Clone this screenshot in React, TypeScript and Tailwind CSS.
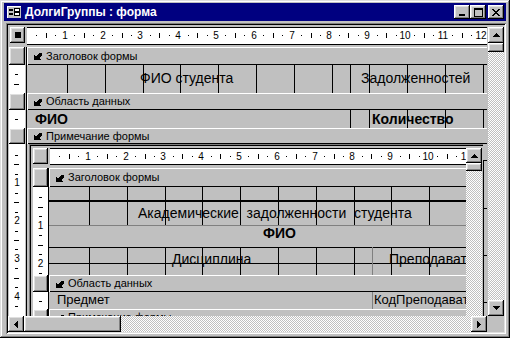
import React from 'react'

const CM = 37.8
const raised =
  'bg-[#c0c0c0] shadow-[inset_-1px_-1px_#000,inset_1px_1px_#fff,inset_-2px_-2px_#808080,inset_2px_2px_#dfdfdf]'
const checker =
  '[background-image:repeating-conic-gradient(#c0c0c0_0_25%,#fff_0_50%)] [background-size:2px_2px]'

type Dir = 'up' | 'down' | 'left' | 'right'

function Tri({ dir }: { dir: Dir }) {
  const rows = [1, 3, 5, 7]
  if (dir === 'up' || dir === 'down') {
    return (
      <svg width="7" height="4" shapeRendering="crispEdges">
        {rows.map((w, i) => (
          <rect key={i} x={(7 - w) / 2} y={dir === 'up' ? i : 3 - i} width={w} height="1" fill="#000" />
        ))}
      </svg>
    )
  }
  return (
    <svg width="4" height="7" shapeRendering="crispEdges">
      {rows.map((h, i) => (
        <rect key={i} y={(7 - h) / 2} x={dir === 'left' ? i : 3 - i} height={h} width="1" fill="#000" />
      ))}
    </svg>
  )
}

function ScrollBtn({ dir, className = 'w-[16px] h-[16px]' }: { dir: Dir; className?: string }) {
  return (
    <div className={`${raised} ${className} shrink-0 flex items-center justify-center`}>
      <Tri dir={dir} />
    </div>
  )
}

// section marker: bold arrow pointing down-left
function SectionGlyph() {
  return (
    <svg width="8" height="8" viewBox="0 0 8 8" shapeRendering="crispEdges">
      <polygon points="0,8 0,3 2,5 5,1 8,1 8,3 5,6 7,8" fill="#000" />
    </svg>
  )
}

function Bar({ label, h }: { label: string; h: string }) {
  return (
    <div
      className={`${h} shrink-0 flex items-center gap-[4px] pl-[7px] text-[11px] leading-none whitespace-nowrap shadow-[inset_0_1px_#fff,inset_1px_0_#fff,inset_0_-1px_#000]`}
    >
      <SectionGlyph />
      <span>{label}</span>
    </div>
  )
}

function HRuler({ count, className }: { count: number; className: string }) {
  const marks = []
  for (let i = 1; i <= count; i++) {
    const x = Math.round((i * CM) / 4)
    if (i % 4 === 0)
      marks.push(
        <span key={i} className="absolute top-0 h-full flex items-center -translate-x-1/2 text-[10px] leading-none" style={{ left: x }}>
          {i / 4}
        </span>
      )
    else if (i % 2 === 0) marks.push(<span key={i} className="absolute top-[5px] w-px h-[5px] bg-black" style={{ left: x }} />)
    else marks.push(<span key={i} className="absolute top-[7px] w-px h-px bg-black" style={{ left: x }} />)
  }
  return <div className={`relative bg-white overflow-hidden ${className}`}>{marks}</div>
}

function VRuler({ count, origin, className }: { count: number; origin: number; className: string }) {
  const marks = []
  for (let i = 1; i <= count; i++) {
    const y = Math.round(origin + (i * CM) / 4)
    if (i % 4 === 0)
      marks.push(
        <span key={i} className="absolute left-0 w-full flex justify-center -translate-y-1/2 text-[10px] leading-none" style={{ top: y }}>
          {i / 4}
        </span>
      )
    else if (i % 2 === 0) marks.push(<span key={i} className="absolute left-[5px] w-[5px] h-px bg-black" style={{ top: y }} />)
    else marks.push(<span key={i} className="absolute left-[6px] w-[3px] h-px bg-black" style={{ top: y }} />)
  }
  return <div className={`relative bg-white overflow-hidden shrink-0 ${className}`}>{marks}</div>
}

function GridLines({ from, to, top, height }: { from: number; to: number; top: number; height: number }) {
  const lines = []
  for (let k = from; k <= to; k++) {
    lines.push(
      <span key={k} className="absolute w-px bg-black" style={{ left: Math.round(40 + k * CM), top, height }} />
    )
  }
  return <>{lines}</>
}

function CapBtn({ children, className = '' }: { children: React.ReactNode; className?: string }) {
  return <div className={`${raised} w-[16px] h-[14px] flex items-center justify-center ${className}`}>{children}</div>
}

function FormIcon() {
  return (
    <svg width="16" height="16" viewBox="0 0 16 16" shapeRendering="crispEdges">
      <rect x="1" y="2" width="14" height="12" fill="#c0c0c0" />
      <rect x="1" y="2" width="14" height="1" fill="#fff" />
      <rect x="1" y="2" width="1" height="12" fill="#fff" />
      <rect x="3" y="5" width="4" height="2" fill="#000" />
      <rect x="3" y="9" width="4" height="2" fill="#000" />
      <rect x="8.5" y="4.5" width="5" height="3" fill="#fff" stroke="#000" strokeWidth="1" />
      <rect x="8.5" y="8.5" width="5" height="3" fill="#fff" stroke="#000" strokeWidth="1" />
    </svg>
  )
}

function TitleBar() {
  return (
    <div className="h-[18px] bg-[#000080] flex items-center pl-[2px] pr-[2px]">
      <FormIcon />
      <span className="ml-[3px] text-white font-bold text-[12px] leading-none whitespace-nowrap">ДолгиГруппы : форма</span>
      <div className="ml-auto flex items-center">
        <CapBtn>
          <svg width="8" height="8" shapeRendering="crispEdges">
            <rect x="1" y="6" width="6" height="2" fill="#000" />
          </svg>
        </CapBtn>
        <CapBtn>
          <svg width="9" height="9" shapeRendering="crispEdges">
            <rect x="0.5" y="0.5" width="8" height="8" fill="none" stroke="#000" />
            <rect x="0" y="1" width="9" height="1" fill="#000" />
          </svg>
        </CapBtn>
        <CapBtn className="ml-[2px]">
          <svg width="8" height="7" shapeRendering="crispEdges">
            {[
              [0, 0, 2], [6, 0, 2], [1, 1, 2], [5, 1, 2], [2, 2, 4], [3, 3, 2], [2, 4, 4], [1, 5, 2], [5, 5, 2], [0, 6, 2], [6, 6, 2],
            ].map(([x, y, w], i) => (
              <rect key={i} x={x} y={y} width={w} height="1" fill="#000" />
            ))}
          </svg>
        </CapBtn>
      </div>
    </div>
  )
}

function Subform() {
  return (
    <div className="w-[454px] h-[180px] pl-[2px] pt-[2px] shadow-[inset_1px_1px_#808080,inset_2px_2px_#000] grid grid-cols-[18px_417px_16px_1px] grid-rows-[22px_156px]">
      {/* ruler row */}
      <div className="col-start-1 row-start-1 pl-[2px] pt-[2px]">
        <div className={`${raised} w-[15px] h-[16px]`} />
      </div>
      <div className="col-start-2 row-start-1 pt-[2px] pl-[1px]">
        <HRuler count={44} className="h-[17px] border-y border-black" />
      </div>
      <div className="col-start-3 row-start-1 row-span-2 pt-[2px] flex flex-col">
        <ScrollBtn dir="up" className="w-[16px] h-[15px]" />
        <div className={`${raised} h-[8px] shrink-0`} />
        <div className={`flex-1 ${checker}`} />
      </div>

      {/* vertical ruler */}
      <div className="col-start-1 row-start-2 flex overflow-hidden">
        <div className="ml-[2px] w-[15px] flex flex-col">
          <div className={`${raised} h-[19px] shrink-0`} />
          <VRuler count={11} origin={1} className="h-[88px]" />
          <div className={`${raised} h-[17px] shrink-0`} />
          <VRuler count={1} origin={0} className="h-[17px]" />
          <div className={`${raised} h-[17px] shrink-0`} />
        </div>
        <div className="w-px bg-black" />
      </div>

      {/* design surface */}
      <div className="col-start-2 row-start-2 flex flex-col overflow-hidden">
        <Bar label="Заголовок формы" h="h-[19px]" />
        <div className="relative h-[88px] shrink-0">
          <GridLines from={0} to={9} top={0} height={38} />
          <GridLines from={0} to={9} top={60} height={28} />
          <span className="absolute inset-x-0 top-[13px] h-[2px] bg-black" />
          <span className="absolute inset-x-0 top-[38px] h-px bg-[#808080]" />
          <span className="absolute inset-x-0 top-[60px] h-px bg-black" />
          <span className="absolute inset-x-0 top-[76px] h-px bg-black" />
          <span className="absolute left-[323px] top-[60px] h-[28px] w-px bg-[#808080]" />
          <span className="absolute left-[89px] top-[18px] text-[14px] leading-[16px] whitespace-pre">
            Академические  задолженности  студента
          </span>
          <span className="absolute left-[214px] top-[38px] text-[14px] leading-[16px] font-bold">ФИО</span>
          <span className="absolute left-[123px] top-[64px] text-[14px] leading-[16px]">Дисциплина</span>
          <span className="absolute left-[340px] top-[64px] text-[14px] leading-[16px] whitespace-nowrap">Преподават</span>
        </div>
        <Bar label="Область данных" h="h-[17px]" />
        <div className="relative h-[17px] shrink-0">
          <span className="absolute left-[323px] top-0 h-full w-px bg-[#808080]" />
          <span className="absolute left-[8px] top-0 text-[13px] leading-[16px]">Предмет</span>
          <span className="absolute left-[325px] top-0 text-[13px] leading-[16px] whitespace-nowrap">КодПреподават</span>
        </div>
        <Bar label="Примечание формы" h="h-[17px]" />
      </div>
    </div>
  )
}

export default function App() {
  return (
    <div className="w-[510px] h-[338px] overflow-hidden bg-[#c0c0c0] px-[4px] pt-[3px] font-['Liberation_Sans',Arial,sans-serif] text-black shadow-[inset_-1px_-1px_#000,inset_1px_1px_#dfdfdf,inset_-2px_-2px_#808080,inset_2px_2px_#fff]">
      <TitleBar />
      <div className="ml-[2px] mt-[2px] w-[500px] h-[311px] p-[2px] shadow-[inset_1px_1px_#808080,inset_-1px_-1px_#fff,inset_2px_2px_#000,inset_-2px_-2px_#dfdfdf]">
        <div className="grid grid-cols-[19px_460px_1px_16px] grid-rows-[22px_269px_16px] h-full">
          {/* form selector */}
          <div className="col-start-1 row-start-1 pl-[2px] pt-[2px]">
            <div className={`${raised} w-[15px] h-[16px] flex items-center justify-center`}>
              <div className="w-[6px] h-[6px] bg-black" />
            </div>
          </div>
          {/* horizontal ruler */}
          <div className="col-start-2 row-start-1 pt-[2px]">
            <HRuler count={49} className="h-[18px] border-y border-black" />
          </div>
          {/* vertical scrollbar */}
          <div className="col-start-4 row-start-1 row-span-2 pt-[2px] flex flex-col">
            <ScrollBtn dir="up" />
            <div className={`${raised} h-[9px] shrink-0`} />
            <div className={`flex-1 ${checker}`} />
            <ScrollBtn dir="down" />
          </div>

          {/* vertical ruler + section selectors */}
          <div className="col-start-1 row-start-2 flex">
            <div className="ml-[1px] w-[16px] flex flex-col">
              <div className={`${raised} h-[18px] shrink-0`} />
              <VRuler count={2} origin={0} className="h-[28px]" />
              <div className={`${raised} h-[17px] shrink-0`} />
              <VRuler count={1} origin={0} className="h-[18px]" />
              <div className={`${raised} h-[16px] shrink-0`} />
              <VRuler count={18} origin={1.5} className="flex-1" />
            </div>
            <div className="w-px" />
            <div className="w-px bg-black" />
          </div>

          {/* design surface */}
          <div className="col-start-2 row-start-2 flex flex-col overflow-hidden">
            <Bar label="Заголовок формы" h="h-[18px]" />
            <div className="relative h-[28px] shrink-0">
              <GridLines from={0} to={11} top={0} height={28} />
              <span className="absolute left-[323px] top-0 h-full w-px bg-black" />
              <span className="absolute left-[113px] top-[5px] text-[14px] leading-[16px] whitespace-nowrap">ФИО студента</span>
              <span className="absolute left-[334px] top-[5px] text-[14px] leading-[16px]">Задолженностей</span>
            </div>
            <Bar label="Область данных" h="h-[17px]" />
            <div className="relative h-[18px] shrink-0">
              <GridLines from={8} to={11} top={0} height={18} />
              <span className="absolute left-[323px] top-0 h-full w-px bg-black" />
              <span className="absolute left-[8px] top-[1px] text-[14px] leading-[16px] font-bold">ФИО</span>
              <span className="absolute left-[345px] top-[1px] text-[14px] leading-[16px] font-bold">Количество</span>
            </div>
            <Bar label="Примечание формы" h="h-[16px]" />
            <div className="relative flex-1 overflow-hidden pl-[2px]">
              <span className="absolute left-[456px] top-[16px] bottom-0 w-px bg-black" />
              <span className="absolute left-[456px] top-[16px] w-[4px] h-px bg-black" />
              <span className="absolute left-[456px] top-[64px] w-[4px] h-px bg-black" />
              <span className="absolute left-[456px] top-[111px] w-[4px] h-px bg-black" />
              <span className="absolute left-[456px] top-[158px] w-[4px] h-px bg-black" />
              <Subform />
            </div>
          </div>

          {/* horizontal scrollbar */}
          <div className="col-start-1 col-span-2 row-start-3 flex">
            <ScrollBtn dir="left" />
            <div className={`${raised} w-[97px] shrink-0`} />
            <div className={`flex-1 ${checker}`} />
            <ScrollBtn dir="right" />
          </div>
        </div>
      </div>
    </div>
  )
}
